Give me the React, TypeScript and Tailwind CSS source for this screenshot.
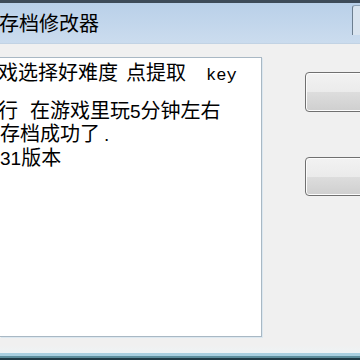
export default function App() {
  const cjk = { fontFamily: '"Noto Sans CJK SC", "Noto Sans", sans-serif' };
  const mono = { fontFamily: '"Liberation Mono", monospace' };
  const digits = { fontFamily: '"Liberation Sans", Arial, sans-serif' };
  const row = "h-[23.5px] whitespace-nowrap flex items-baseline overflow-visible";

  return (
    <div className="w-[360px] h-[360px] overflow-hidden bg-[#f0f0f0] flex flex-col" style={cjk}>
      {/* Title bar */}
      <div className="h-[44px] shrink-0 border-t-[3px] border-t-[#3d4b59] border-b border-b-[#c2d3e4] bg-gradient-to-b from-[#b9d0e9] to-[#cbdcee] flex items-center justify-between">
        <span className="text-[20px] leading-none text-black -ml-[1px]">存档修改器</span>
        <div className="self-start mt-[2px] h-[30px] w-[8px] border-l border-l-[#6d7f90] border-t border-t-[#8fa3b6] rounded-tl-[3px] bg-[#d9e4ef]" />
      </div>

      {/* Body */}
      <div className="flex-1 flex pt-[13px]">
        <div className="w-[262px] h-[280px] shrink-0 bg-white border border-l-0 border-[#a9b8c4] shadow-[1px_1px_0_#dce8f0] text-[20px] leading-[23.5px] text-black pt-[2px] overflow-hidden">
          <div className={`-ml-[2px] ${row}`}>
            <span>戏选择好难度</span>
            <span className="inline-block w-[8px]" />
            <span>点提取</span>
            <span className="inline-block w-[20px]" />
            <span style={mono} className="text-[17px] leading-[23.5px]">key</span>
          </div>
          <div className={`-ml-[2px] mt-[14px] ${row}`}>
            <span>行</span>
            <span className="inline-block w-[12px]" />
            <span>在游戏里玩</span>
            <span style={digits} className="text-[19px] leading-[23.5px]">5</span>
            <span>分钟左右</span>
          </div>
          <div className={row}>
            <span>存档成功了</span>
            <span style={digits} className="text-[19px] leading-[23.5px] ml-[4px]">.</span>
          </div>
          <div className={row}>
            <span style={digits} className="text-[19px] leading-[23.5px]">31</span>
            <span>版本</span>
          </div>
        </div>

        <div className="flex flex-col ml-[43px] pt-[2px]">
          <div className="w-[70px] h-[40px] mt-[13px] rounded-[4px] border border-[#707070] bg-[linear-gradient(#f2f2f2_0%,#ebebeb_50%,#dddddd_51%,#cfcfcf_100%)] shadow-[inset_0_0_0_1px_#fcfcfc]" />
          <div className="w-[70px] h-[39px] mt-[45px] rounded-[4px] border border-[#707070] bg-[linear-gradient(#f2f2f2_0%,#ebebeb_50%,#dddddd_51%,#cfcfcf_100%)] shadow-[inset_0_0_0_1px_#fcfcfc]" />
        </div>
      </div>

      {/* Bottom frame */}
      <div className="h-[8px] shrink-0 bg-gradient-to-b from-[#f0f0f0] to-[#eef3f5]" />
      <div className="h-[3px] shrink-0 bg-[#a8cfe0]" />
      <div className="h-[2px] shrink-0 bg-[#5c8d9c]" />
      <div className="h-[2px] shrink-0 bg-[#1f3a46]" />
    </div>
  );
}
